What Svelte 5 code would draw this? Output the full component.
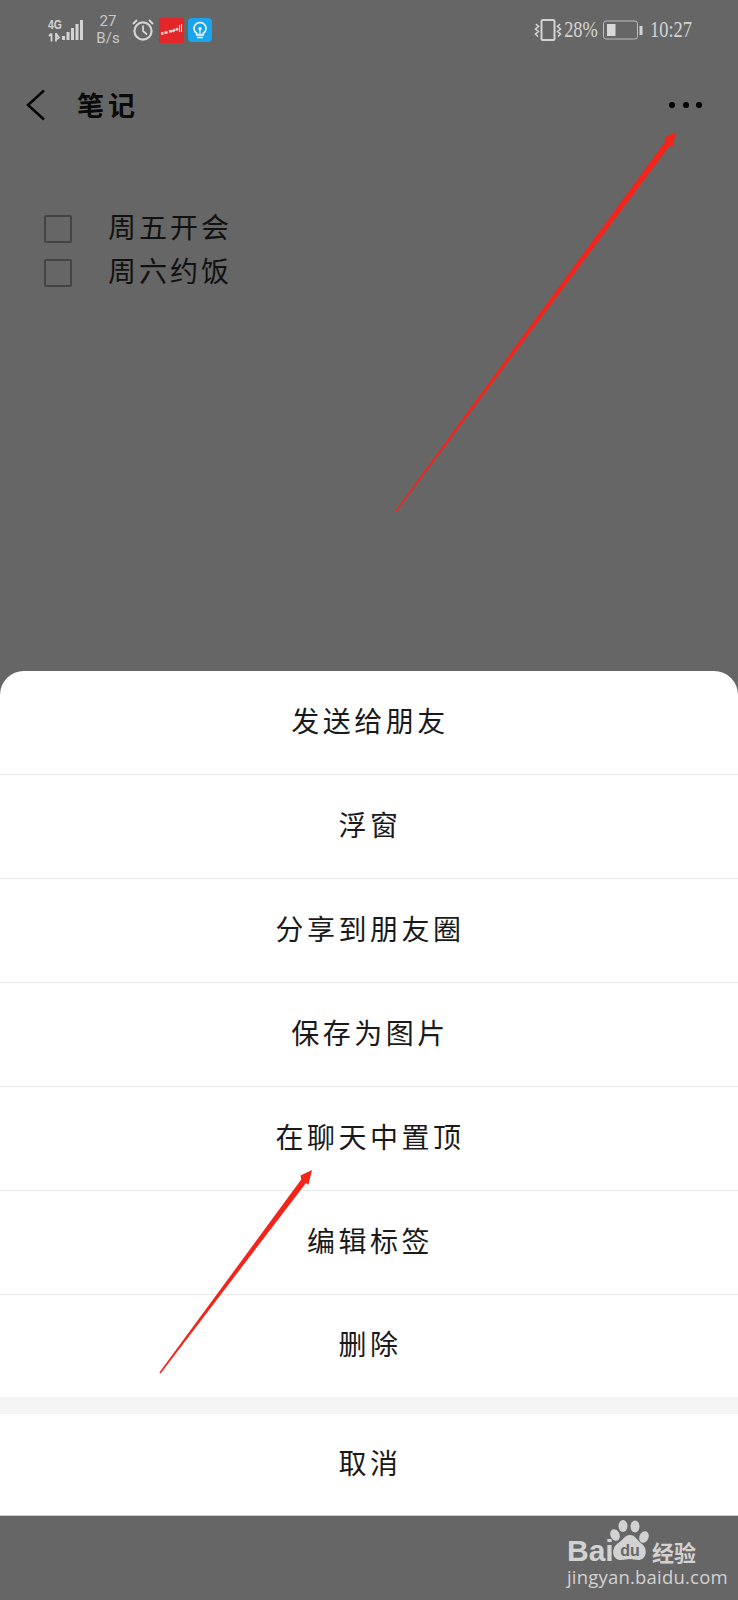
<script lang="ts">
	// Data
	const todos = ['周五开会', '周六约饭']
	const actions = ['发送给朋友', '浮窗', '分享到朋友圈', '保存为图片', '在聊天中置顶', '编辑标签', '删除']

	// Tapered annotation arrow, from tail to tip
	const arrowPath = (x1: number, y1: number, x2: number, y2: number, body: number, head: number, len: number) => {
		const d = Math.hypot(x2 - x1, y2 - y1)
		const ux = (x2 - x1) / d
		const uy = (y2 - y1) / d
		const nx = -uy
		const ny = ux
		const tail = 1.4
		const bx = x2 - ux * len
		const by = y2 - uy * len
		const nbx = x2 - ux * len * 0.8
		const nby = y2 - uy * len * 0.8
		const pts = [
			[x1 + (nx * tail) / 2, y1 + (ny * tail) / 2],
			[bx + (nx * body) / 2, by + (ny * body) / 2],
			[bx + (nx * head) / 2, by + (ny * head) / 2],
			[x2, y2],
			[nbx - (nx * head) / 2, nby - (ny * head) / 2],
			[bx - (nx * body) / 2, by - (ny * body) / 2],
			[x1 - (nx * tail) / 2, y1 - (ny * tail) / 2],
		]
		return 'M' + pts.map(p => `${p[0].toFixed(1)} ${p[1].toFixed(1)}`).join('L') + 'Z'
	}
</script>

<div class="page">
	<div class="status">
		<div class="status-left">
			<div class="net">
				<span class="net-g">4G</span>
				<svg class="net-arrows" width="13" height="9" viewBox="0 0 13 9">
					<path d="M3.5 0.5v8M1 3l2.5-2.5M8 8.5V0.5l3 4-3 2" stroke="#d4d4d4" stroke-width="1.8" fill="none" />
				</svg>
			</div>
			<svg class="bars" width="22" height="22" viewBox="0 0 22 22">
				<rect x="0" y="17" width="3" height="4" fill="#d4d4d4" />
				<rect x="4.5" y="13" width="3" height="8" fill="#d4d4d4" />
				<rect x="9" y="9" width="3" height="12" fill="#d4d4d4" />
				<rect x="13.5" y="5" width="3" height="16" fill="#d4d4d4" />
				<rect x="18" y="1" width="3" height="20" fill="#d4d4d4" />
			</svg>
			<div class="speed"><span>27</span><span>B/s</span></div>
			<svg class="alarm" width="22" height="24" viewBox="0 0 22 24">
				<circle cx="11" cy="13" r="8.6" fill="none" stroke="#d4d4d4" stroke-width="2.2" />
				<path d="M11 7.5V13l4 3.5" fill="none" stroke="#d4d4d4" stroke-width="1.8" />
				<path d="M1 6l4-4M21 6l-4-4" stroke="#d4d4d4" stroke-width="2" />
			</svg>
			<svg class="app-icon red" width="25" height="25" viewBox="0 0 25 25">
				<rect width="25" height="25" rx="2" fill="#e3262a" />
				<path d="M2 15.5h2.5M5.5 14.5h3M10 13.5l3-.5M13.5 13.5l2.5-2M17 12l2-1.5" stroke="#f6dede" stroke-width="2.4" fill="none" />
				<path d="M20.5 7v7M22.5 6v8" stroke="#f6dede" stroke-width="1.1" fill="none" />
			</svg>
			<svg class="app-icon" width="24" height="24" viewBox="0 0 24 24">
				<rect width="24" height="24" rx="4" fill="#18a5ee" />
				<path d="M8.8 15.5a6 6 0 1 1 6.4 0V17H8.8Z" fill="none" stroke="#fff" stroke-width="1.5" />
				<path d="M9 19.5h6" stroke="#fff" stroke-width="1.5" />
				<circle cx="12" cy="10.5" r="1.6" fill="#fff" />
				<path d="M12 11v5" stroke="#fff" stroke-width="1.2" />
			</svg>
		</div>
		<div class="status-right">
			<svg class="vibrate" width="28" height="22" viewBox="0 0 28 22">
				<rect x="7.5" y="1" width="13" height="20" rx="1.5" fill="none" stroke="#d4d4d4" stroke-width="2" />
				<path d="M2 5l2.5 2.5L1.5 10l3 2.5-3 2.5 2.5 2.5M26 5l-2.5 2.5 3 2.5-3 2.5 3 2.5-2.5 2.5" fill="none" stroke="#d4d4d4" stroke-width="1.6" />
			</svg>
			<span class="cond pct">28%</span>
			<svg class="battery" width="41" height="20" viewBox="0 0 41 20">
				<rect x="0.5" y="1" width="34" height="18" rx="2.5" fill="none" stroke="#bcbcbc" />
				<rect x="4" y="4" width="8.5" height="12" fill="#d9d9d9" />
				<rect x="36.5" y="6" width="3" height="9" fill="#d4d4d4" />
			</svg>
			<span class="cond time">10:27</span>
		</div>
	</div>

	<header class="header">
		<svg class="back" width="20" height="32" viewBox="0 0 20 32">
			<path d="M18 1.5 2 16l16 14.5" fill="none" stroke="#000" stroke-width="2.4" />
		</svg>
		<span class="title">笔记</span>
		<div class="more"><i></i><i></i><i></i></div>
	</header>

	<ul class="todos">
		{#each todos as todo}
			<li class="todo"><span class="box"></span><span class="todo-text">{todo}</span></li>
		{/each}
	</ul>

	<div class="sheet">
		{#each actions as action}
			<div class="row">{action}</div>
		{/each}
		<div class="sheet-gap"></div>
		<div class="row last">取消</div>
	</div>

	<footer class="footer">
		<div class="logo">
			<div class="logo-top">
				<span class="bai">Bai</span>
				<svg class="paw" width="40" height="44" viewBox="0 0 40 44">
					<ellipse cx="13" cy="6" rx="4.5" ry="6" fill="#d2d2d2" />
					<ellipse cx="25" cy="6.5" rx="4.5" ry="6" fill="#d2d2d2" />
					<ellipse cx="5" cy="15" rx="4.5" ry="6" fill="#d2d2d2" transform="rotate(-25 5 15)" />
					<ellipse cx="34" cy="17" rx="4.5" ry="6" fill="#d2d2d2" transform="rotate(25 34 17)" />
					<path d="M20 15c5 0 7 5 12 9 6 5 5 16-4 16-3 0-5-1-8-1s-5 1-9 1c-9 0-10-11-4-16 6-4 8-9 13-9Z" fill="#d2d2d2" />
					<text x="20" y="36" class="du">du</text>
				</svg>
				<span class="jy">经验</span>
			</div>
			<div class="domain">jingyan.baidu.com</div>
		</div>
	</footer>

	<svg class="arrows" width="738" height="1600" viewBox="0 0 738 1600">
		<path d={arrowPath(396, 511, 676, 132, 6, 12, 14)} fill="#f5231a" />
		<path d={arrowPath(160, 1373, 312, 1170, 6, 12, 14)} fill="#f5231a" />
	</svg>
</div>

<style>
	:global(body) {
		margin: 0;
	}

	.page {
		position: relative;
		width: 738px;
		height: 1600px;
		display: flex;
		flex-direction: column;
		overflow: hidden;
		background: #666;
		font-family: 'Noto Sans CJK SC', 'Liberation Sans', sans-serif;
		color: #111;
	}

	.status {
		height: 60px;
		flex: none;
		display: flex;
		justify-content: space-between;
		align-items: center;
		padding: 0 46px 0 48px;
		color: #d4d4d4;
	}

	.status-left,
	.status-right {
		display: flex;
		align-items: center;
	}

	.net {
		width: 14px;
		display: flex;
		flex-direction: column;
		align-items: flex-start;
		gap: 2px;
		margin-top: 1px;
	}

	.net-g {
		font: bold 13px/12px 'Liberation Sans', sans-serif;
		transform: scaleX(0.8);
		transform-origin: left;
	}

	.net-arrows {
		display: block;
	}

	.speed {
		display: flex;
		flex-direction: column;
		align-items: center;
		width: 24px;
		margin-left: 12px;
		font: 15px/17px 'Roboto', sans-serif;
		color: #c8c8c8;
	}

	.alarm {
		margin-left: 12px;
	}

	.app-icon {
		margin-left: 4px;
	}

	.app-icon.red {
		margin-left: 5px;
	}

	.cond {
		display: inline-block;
		font-family: 'Liberation Serif', serif;
		font-size: 23px;
		line-height: 24px;
		color: #d4d4d4;
		transform: scaleX(0.8);
	}

	.pct {
		width: 32px;
		margin-left: 3px;
		text-align: center;
		white-space: nowrap;
		display: flex;
		justify-content: center;
	}

	.battery {
		margin-left: 6px;
	}

	.time {
		width: 42px;
		margin-left: 6px;
		display: flex;
		justify-content: center;
		white-space: nowrap;
	}

	.header {
		height: 90px;
		flex: none;
		display: flex;
		align-items: center;
		padding: 0 36px 0 26px;
		box-sizing: border-box;
	}

	.back {
		flex: none;
	}

	.title {
		margin-left: 31px;
		margin-bottom: 2px;
		font-size: 27px;
		font-weight: 700;
		letter-spacing: 4px;
		color: #0a0a0a;
	}

	.more {
		margin-left: auto;
		display: flex;
		gap: 7.5px;
	}

	.more i {
		width: 6px;
		height: 6px;
		border-radius: 50%;
		background: #000;
	}

	.todos {
		list-style: none;
		margin: 0;
		padding: 65px 0 0 44px;
		display: flex;
		flex-direction: column;
		gap: 16px;
	}

	.todo {
		height: 28px;
		display: flex;
		align-items: center;
		gap: 36px;
		font-size: 28px;
		line-height: 28px;
		letter-spacing: 3px;
		color: #111;
	}

	.todo-text {
		padding-bottom: 6px;
	}

	.box {
		width: 28px;
		height: 28px;
		flex: none;
		box-sizing: border-box;
		border: 2px solid #444;
		border-radius: 2px;
	}

	.sheet {
		margin-top: auto;
		background: #fff;
		border-radius: 24px 24px 0 0;
		border-bottom: 1px solid #ccc;
	}

	.row {
		height: 104px;
		box-sizing: border-box;
		display: flex;
		align-items: center;
		justify-content: center;
		padding: 0 0 6px 2px;
		font-size: 28px;
		letter-spacing: 3.5px;
		color: #1a1a1a;
		border-bottom: 1px solid #e8e8e8;
	}

	.row:nth-child(7),
	.row.last {
		border-bottom: 0;
	}

	.row:nth-child(7) {
		height: 102px;
	}

	.row.last {
		height: 101px;
	}

	.sheet-gap {
		height: 17px;
		background: #f5f5f5;
	}

	.footer {
		height: 84px;
		flex: none;
		display: flex;
		justify-content: flex-end;
		padding-right: 41px;
	}

	.logo {
		width: 130px;
		padding-top: 2px;
		color: #d2d2d2;
	}

	.logo-top {
		display: flex;
		align-items: flex-end;
		height: 46px;
	}

	.bai {
		font: bold 30px/26px 'Liberation Sans', sans-serif;
		width: 44px;
	}

	.paw {
		flex: none;
		margin-left: -1px;
	}

	.du {
		font: bold 16px 'Liberation Sans', sans-serif;
		fill: #666;
		text-anchor: middle;
	}

	.jy {
		font-size: 22px;
		line-height: 26px;
		font-weight: 700;
		white-space: nowrap;
		margin-left: 2px;
	}

	.domain {
		font: 18.5px/22px 'Open Sans', sans-serif;
		white-space: nowrap;
		letter-spacing: 0.2px;
		margin-top: 2px;
	}

	.arrows {
		position: absolute;
		left: 0;
		top: 0;
		pointer-events: none;
	}
</style>
